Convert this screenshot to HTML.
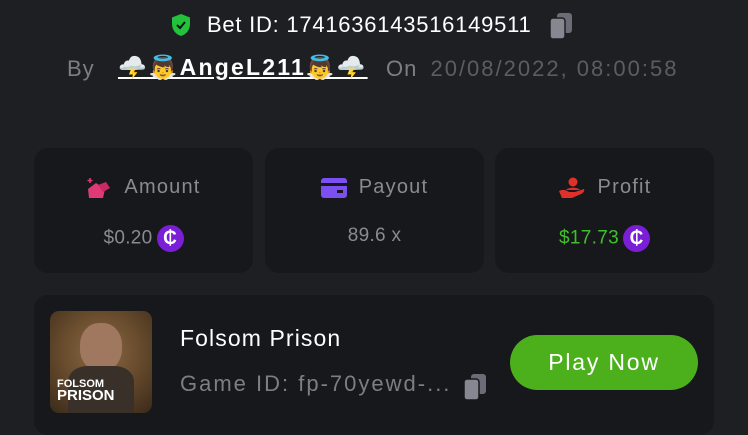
<!DOCTYPE html>
<html><head><meta charset="utf-8"><style>
*{margin:0;padding:0;box-sizing:border-box}
body{width:748px;height:426px;overflow:hidden;background:#1e1f23;font-family:"Liberation Sans",sans-serif;position:relative;color:#fff}
.a{position:absolute;white-space:nowrap}
.card{position:absolute;top:148px;width:219px;height:125px;background:#17181c;border-radius:14px}
.lbl{position:absolute;top:28px;left:0;right:0;text-align:center;font-size:20px;letter-spacing:1.2px;color:#8a8b90}
.val{position:absolute;top:77px;left:0;right:0;text-align:center;font-size:19px;letter-spacing:0.3px;color:#8a8b90}
.coin{display:inline-block;width:27px;height:27px;border-radius:50%;background:#7a1fd6;color:#fff;font-weight:bold;font-size:19px;line-height:27px;text-align:center;vertical-align:middle;margin-left:4px;letter-spacing:0}
.ic{display:inline-block;vertical-align:middle;margin-right:12px}
</style></head><body>
<svg class="a" style="left:171px;top:13px" width="20" height="24" viewBox="0 0 20 24"><path d="M10 1L19 4.5V11c0 6-4 10.5-9 12C5 21.5 1 17 1 11V4.5Z" fill="#22c33a"/><path d="M6 12l3 3 5-6" stroke="#111" stroke-width="2" fill="none"/></svg>
<div class="a" style="left:207px;top:12px;font-size:22px;letter-spacing:0.75px;color:#fff">Bet ID: 1741636143516149511</div>
<svg class="a" style="left:549px;top:12px" width="24" height="28" viewBox="0 0 24 28"><rect x="8" y="1" width="15" height="20" rx="3" fill="#6a6d75"/><rect x="1" y="6" width="15" height="21" rx="3" fill="#858891" stroke="#1e1f23" stroke-width="1.5"/></svg>
<div class="a" style="left:67px;top:56px;font-size:22px;letter-spacing:1px;color:#7d7e84">By</div>
<div class="a" style="left:118px;top:54px;font-size:23px;letter-spacing:2.2px;font-weight:bold;color:#fff;text-decoration:underline;font-family:'Liberation Sans','DejaVu Sans',sans-serif">🌩️👼AngeL211👼🌩️</div>
<div class="a" style="left:386px;top:56px;font-size:22px;letter-spacing:1px;color:#7d7e84">On <span style="color:#5c5d63;margin-left:6px;letter-spacing:2px">20/08/2022, 08:00:58</span></div>

<div class="card" style="left:34px"><div class="lbl"><svg class="ic" width="26" height="22" viewBox="0 0 26 22"><path d="M2 12l8-6 9 6-2 9H3z" fill="#e03a74"/><path d="M12 8l8-3 4 6-7 4z" fill="#c92a62"/><path d="M4 1v5M1.5 3.5h5" stroke="#e03a74" stroke-width="1.5"/></svg>Amount</div><div class="val">$0.20<span class="coin">₵</span></div></div>
<div class="card" style="left:265px"><div class="lbl"><svg class="ic" width="26" height="22" viewBox="0 0 26 22"><rect x="0" y="1" width="26" height="20" rx="3" fill="#7b4ff0"/><rect x="0" y="6" width="26" height="3" fill="#17181c"/><rect x="16" y="13" width="6" height="3" fill="#17181c"/></svg>Payout</div><div class="val">89.6 x</div></div>
<div class="card" style="left:495px"><div class="lbl"><svg class="ic" width="28" height="22" viewBox="0 0 28 22"><circle cx="15" cy="5" r="4.5" fill="#e0302a"/><path d="M8 13c2-3 12-3 14 0z" fill="#e0302a"/><path d="M1 14c4-2 7-1 10 1h6l9-3c1 2-1 4-3 5l-9 4H4z" fill="#e0302a"/></svg>Profit</div><div class="val"><span style="color:#3fc02a">$17.73</span><span class="coin">₵</span></div></div>

<div class="a" style="left:34px;top:295px;width:680px;height:140px;background:#17181c;border-radius:14px"></div>
<div class="a" style="left:50px;top:311px;width:102px;height:102px;border-radius:9px;background:radial-gradient(circle at 50% 40%,#8a6a48 0,#6b4e2e 45%,#3a2a1a 100%);overflow:hidden">
<div class="a" style="left:30px;top:12px;width:42px;height:48px;border-radius:45%;background:#a07860"></div>
<div class="a" style="left:18px;top:55px;width:66px;height:50px;border-radius:30% 30% 0 0;background:#3a302a"></div>
<div class="a" style="left:7px;top:67px;font-size:11px;font-weight:bold;color:#fff;line-height:12px">FOLSOM<br><span style="font-size:15px">PRISON</span></div>
</div>
<div class="a" style="left:180px;top:325px;font-size:23px;letter-spacing:1.1px;color:#fff">Folsom Prison</div>
<div class="a" style="left:180px;top:371px;font-size:22px;letter-spacing:2px;color:#7d7e84">Game ID: fp-70yewd-...</div>
<svg class="a" style="left:463px;top:373px" width="24" height="28" viewBox="0 0 24 28"><rect x="8" y="1" width="15" height="20" rx="3" fill="#6a6d75"/><rect x="1" y="6" width="15" height="21" rx="3" fill="#858891" stroke="#17181c" stroke-width="1.5"/></svg>
<div class="a" style="left:510px;top:335px;width:188px;height:55px;border-radius:28px;background:#4cb01c;color:#fff;font-size:23px;letter-spacing:1.8px;text-align:center;line-height:55px">Play Now</div>
</body></html>
